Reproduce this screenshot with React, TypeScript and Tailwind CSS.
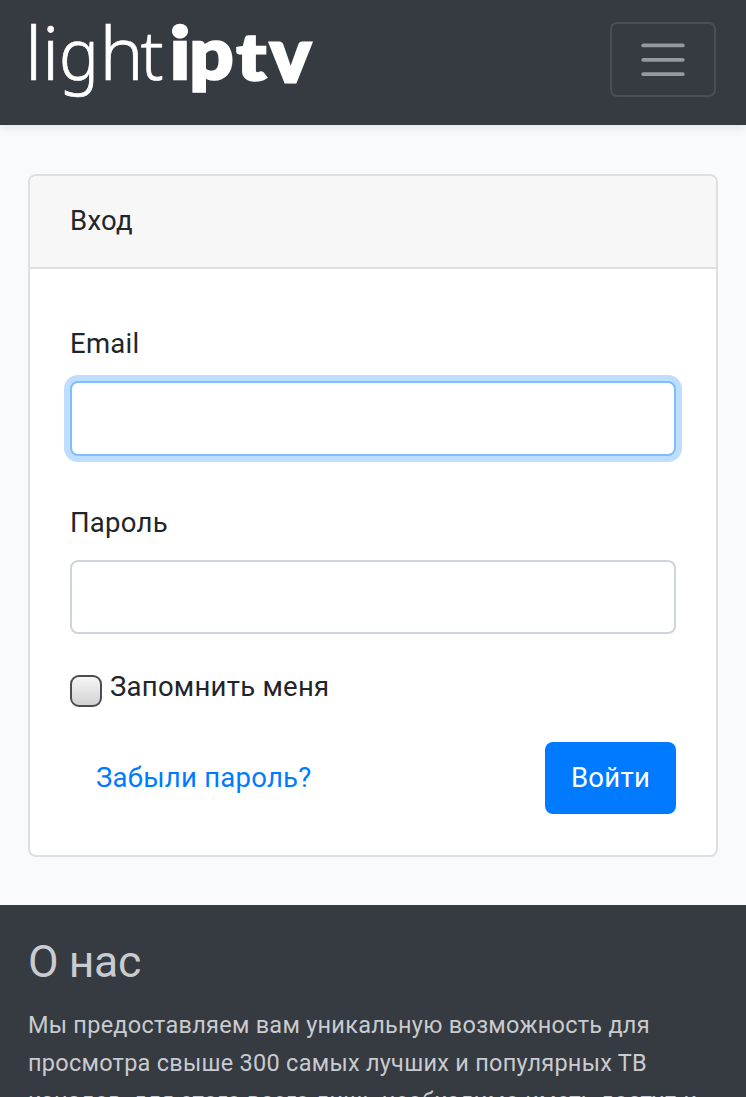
import { useState } from "react";

const thinLetters = [
  { char: "l", transform: "translate(-3 65)" },
  { char: "i", transform: "translate(14 65)" },
  { char: "g", transform: "translate(31 64.5) scale(0.9 0.98)" },
  { char: "h", transform: "translate(71.5 65)" },
  { char: "t", transform: "translate(112.5 65) scale(0.92 0.93)" },
];

const boldLetters = [
  { char: "i", transform: "translate(142 64) scale(1.04 0.98)" },
  { char: "p", transform: "translate(161.5 64) scale(1.04 0.97)" },
  { char: "t", transform: "translate(208.5 64.5) scale(1.06 0.88)" },
  { char: "v", transform: "translate(242 66.5) scale(1.04 1.03)" },
];

function Logo() {
  return (
    <svg width="290" height="100" viewBox="0 0 290 100" fill="#fff" stroke="#fff" className="overflow-visible tracking-normal" role="img" aria-label="lightiptv">
      <g fontSize="74" fontWeight="300" fontFamily="'Noto Sans', sans-serif" strokeWidth="0.7">
        {thinLetters.map((l, i) => (
          <text key={i} transform={l.transform}>{l.char}</text>
        ))}
      </g>
      <g fontSize="74" fontWeight="900" fontFamily="Lato, sans-serif" strokeWidth="2.8">
        {boldLetters.map((l, i) => (
          <text key={i} transform={l.transform}>{l.char}</text>
        ))}
      </g>
    </svg>
  );
}

function Navbar() {
  return (
    <nav className="relative flex h-[125px] items-start justify-between bg-[#363a41] pl-7 pr-[30px] shadow-[0_4px_8px_rgba(0,0,0,0.075)]">
      <a href="#" className="mt-[15px]">
        <Logo />
      </a>
      <button
        type="button"
        aria-label="Toggle navigation"
        className="mt-[22px] flex h-[75px] w-[106px] items-center justify-center rounded-[7px] border-2 border-[#4a4e55]"
      >
        <svg width="56" height="56" viewBox="0 0 30 30" fill="none" stroke="#9799a0" strokeWidth="2" strokeLinecap="round" strokeMiterlimit="10">
          <path d="M4.4 7.2h21.2M4.4 14.9h21.2M4.4 22.6h21.2" />
        </svg>
      </button>
    </nav>
  );
}

function LoginCard() {
  const [email, setEmail] = useState("");
  const [password, setPassword] = useState("");
  const [remember, setRemember] = useState(false);

  return (
    <div className="h-[683px] rounded-[8px] border-2 border-[#dfdfdf] bg-white">
      <div className="h-[93px] rounded-t-[6px] border-b-2 border-[#dfdfdf] bg-[#f7f7f7] px-10 pt-[23px] leading-[43px]">
        Вход
      </div>
      <form className="px-10 pt-[53px]" onSubmit={(e) => e.preventDefault()}>
        <label htmlFor="email" className="block leading-[43px]">
          Email
        </label>
        <input
          id="email"
          type="text"
          value={email}
          onChange={(e) => setEmail(e.target.value)}
          className="mt-[16px] block h-[75px] w-full rounded-[8px] border-2 border-[#80bdff] bg-white px-5 shadow-[0_0_0_6px_#bfdeff] outline-none"
        />

        <label htmlFor="password" className="mt-[45px] block leading-[43px]">
          Пароль
        </label>
        <input
          id="password"
          type="password"
          value={password}
          onChange={(e) => setPassword(e.target.value)}
          className="mt-[16px] block h-[74px] w-full rounded-[8px] border-2 border-[#ced4da] bg-white px-5 outline-none"
        />

        <label className="mt-[31px] flex h-[43px] items-start gap-2 leading-[43px]">
          <input
            type="checkbox"
            checked={remember}
            onChange={(e) => setRemember(e.target.checked)}
            className="mt-[10px] size-8 appearance-none rounded-[9px] border-2 border-[#4d4d4d] bg-linear-to-b from-[#f6f6f6] to-[#d2d2d2]"
          />
          <span>Запомнить меня</span>
        </label>

        <div className="mt-[34px] flex items-center justify-between pl-[26px]">
          <a href="#" className="text-[#007bff]">
            Забыли пароль?
          </a>
          <button type="submit" className="h-[72px] w-[131px] rounded-[8px] bg-[#007bff] text-white">
            Войти
          </button>
        </div>
      </form>
    </div>
  );
}

function Footer() {
  return (
    <footer className="bg-[#363a41] px-7 pt-[30px] text-[#c8cbcf]">
      <h3 className="text-[44.5px] leading-[54px] tracking-[-0.4px]">О нас</h3>
      <p className="mt-[17px] text-[23.5px] leading-[38px] whitespace-nowrap tracking-[0.26px]">
        Мы предоставляем вам уникальную возможность для
        <br />
        просмотра свыше 300 самых лучших и популярных ТВ
        <br />
        каналов, для этого всего лишь необходимо иметь доступ к
      </p>
    </footer>
  );
}

export default function App() {
  return (
    <div className="h-[1097px] w-[746px] overflow-hidden bg-[#f8fafc] font-[Roboto,sans-serif] text-[27.5px] tracking-[0.25px] text-[#212529]">
      <Navbar />
      <main className="px-7 pt-[49px] pb-[48px]">
        <LoginCard />
      </main>
      <Footer />
    </div>
  );
}
